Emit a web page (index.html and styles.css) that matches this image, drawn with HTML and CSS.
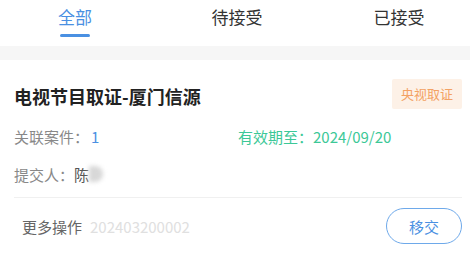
FILE: index.html
```html
<!DOCTYPE html>
<html lang="zh">
<head>
<meta charset="utf-8">
<link rel="stylesheet" href="styles.css">
</head>
<body>
<div class="page">
  <nav class="tabs">
    <div class="tab active"><span class="tab-label">全部</span></div>
    <div class="tab"><span class="tab-label">待接受</span></div>
    <div class="tab"><span class="tab-label">已接受</span></div>
  </nav>
  <div class="gap"></div>
  <section class="card">
    <div class="card-head">
      <h2 class="title">电视节目取证-厦门信源</h2>
      <span class="badge">央视取证</span>
    </div>
    <div class="row">
      <div class="field">关联案件：<span class="num">1</span></div>
      <div class="field valid">有效期至：2024/09/20</div>
    </div>
    <div class="row">
      <div class="field">提交人：<span class="name">陈</span><span class="blur"></span></div>
    </div>
    <div class="card-foot">
      <div class="more">更多操作<span class="code">202403200002</span></div>
      <button class="btn">移交</button>
    </div>
  </section>
  <div class="gap bottom"></div>
</div>
</body>
</html>
```
FILE: styles.css
```css
* { box-sizing: border-box; margin: 0; padding: 0; }
html, body { width: 470px; height: 256px; overflow: hidden; background: #fff; }
body { font-family: "Noto Sans CJK SC", "Noto Sans", sans-serif; color: #222; }

.page { display: flex; flex-direction: column; height: 256px; }

.tabs {
  display: grid;
  grid-template-columns: repeat(3, 162px);
  margin-left: -6px;
  height: 46px;
}
.tab {
  display: flex;
  justify-content: center;
  padding-top: 5px;
  font-size: 17px;
  color: #333;
}
.tab-label { position: relative; line-height: 24px; height: 32px; }
.tab.active { color: #4a90e2; }
.tab.active .tab-label::after {
  content: "";
  position: absolute;
  left: 50%;
  bottom: 0;
  width: 30px;
  height: 3px;
  margin-left: -15px;
  border-radius: 2px;
  background: #4a90e2;
}

.gap { height: 14px; background: #f6f6f6; }
.gap.bottom { flex: 1; height: auto; }

.card { padding: 18px 8px 12px 14px; background: #fff; }
.card-head {
  display: flex;
  justify-content: space-between;
  align-items: center;
  height: 32px;
}
.title { font-size: 18px; font-weight: 700; color: #222; line-height: 24px; margin-top: 4px; }
.badge {
  background: #fdf1e7;
  color: #f3a163;
  font-size: 13px;
  line-height: 30px;
  padding: 0 9px;
  border-radius: 2px;
}

.row { display: flex; height: 38px; align-items: center; font-size: 15px; color: #888; }
.card-head + .row { margin-top: 7px; }
.field { width: 224px; display: flex; align-items: center; }
.field.valid { color: #3cc897; }
.num { color: #4a90e2; margin-left: 2px; }
.name { color: #555; }
.blur {
  display: inline-block;
  width: 14px;
  height: 16px;
  border-radius: 0 8px 8px 0;
  background: #d8d8d8;
  filter: blur(2px);
}

.card-foot {
  display: flex;
  justify-content: space-between;
  align-items: center;
  border-top: 1px solid #f0f0f0;
  margin-top: 4px;
  padding: 10px 0 0 8px;
}
.more { font-size: 15px; color: #666; }
.code { color: #e0e0e0; margin-left: 8px; }
.btn {
  width: 76px;
  height: 36px;
  border: 1.5px solid #6ea9ea;
  border-radius: 18px;
  background: #fff;
  color: #4a90e2;
  font-family: inherit;
  font-size: 15px;
}
```
